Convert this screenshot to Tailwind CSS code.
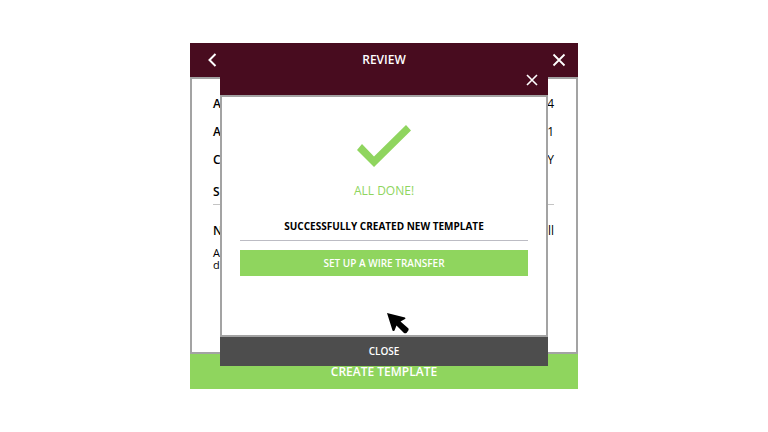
<!DOCTYPE html>
<html lang="en">
<head>
    <meta charset="UTF-8">
    <meta name="viewport" content="width=device-width, initial-scale=1.0">
    <title>Create Template</title>
    <script src="https://cdn.jsdelivr.net/npm/@tailwindcss/browser@4"></script>
</head>
<body class="min-h-screen bg-white flex justify-center items-center font-['Open_Sans','Noto_Sans',sans-serif] text-black">

    <main class="relative w-full max-w-[388px] flex flex-col">

        <!-- Review screen -->
        <header class="h-[34px] bg-[#480c1f] text-white flex items-center justify-between px-3">
            <button type="button" aria-label="Back" class="w-5 flex justify-center">
                <svg class="w-[10px] h-[14px]" viewBox="0 0 10 14" fill="none" stroke="currentColor" stroke-width="2"><path d="M8.500 1 2.500 7l6 6"/></svg>
            </button>
            <h1 class="text-xs font-semibold">REVIEW</h1>
            <button type="button" aria-label="Cancel" class="w-5 flex justify-end">
                <svg class="w-[14px] h-[14px]" viewBox="0 0 14 14" fill="none" stroke="currentColor" stroke-width="1.8"><path d="m1.500 1.500 11 11m0-11-11 11"/></svg>
            </button>
        </header>

        <section class="h-[277px] border-2 border-[#a3a3a3] pl-[21px] pr-[22px] pt-[11px] text-xs">
            <dl>
                <div class="flex justify-between leading-7"><dt class="font-semibold">A</dt><dd>4</dd></div>
                <div class="flex justify-between leading-7"><dt class="font-semibold">A</dt><dd>1</dd></div>
                <div class="flex justify-between leading-7"><dt class="font-semibold">C</dt><dd>Y</dd></div>
            </dl>
            <h2 class="pt-1 leading-7 h-[31px] font-semibold border-b border-[#c4c4c4]">S</h2>
            <dl class="pt-3">
                <div class="flex justify-between leading-7"><dt class="font-semibold">N</dt><dd>ll</dd></div>
            </dl>
            <p class="pt-0.5 leading-3 text-[11px]">A<br>d</p>
        </section>

        <button type="button" class="h-[35px] bg-[#8fd55e] text-white text-xs font-semibold">CREATE TEMPLATE</button>

        <!-- Confirmation dialog -->
        <div role="dialog" aria-labelledby="done" class="absolute inset-x-[30px] top-[22px] flex flex-col bg-white">
            <div class="h-[30px] bg-[#480c1f] text-white flex items-center justify-end px-2.5">
                <button type="button" aria-label="Close dialog">
                    <svg class="w-[12px] h-[12px]" viewBox="0 0 12 12" fill="none" stroke="currentColor" stroke-width="1.6"><path d="m1 1 10 10m0-10L1 11"/></svg>
                </button>
            </div>
            <div class="h-[242px] border-2 border-[#a3a3a3] px-[18px] pt-7 flex flex-col items-center text-center">
                <svg class="w-[54px] h-[42px]" viewBox="0 0 54 42" fill="#8fd55e"><path d="M5 19 0 25 17 42 54 5.500 49 0 17 31.500z"/></svg>
                <h2 id="done" class="mt-4 leading-4 text-xs font-medium text-[#8fd55e]">ALL DONE!</h2>
                <p class="mt-[19px] pb-1.5 w-full leading-4 text-[10px] font-bold border-b border-[#bcbcc4]">SUCCESSFULLY CREATED NEW TEMPLATE</p>
                <button type="button" class="mt-[9px] w-full h-[26px] bg-[#8fd55e] text-white text-[10px] font-semibold">SET UP A WIRE TRANSFER</button>
            </div>
            <button type="button" class="h-[29px] bg-[#4d4d4d] text-white text-[10px] font-semibold">CLOSE</button>

            <!-- Pointer -->
            <svg class="absolute left-1/2 ml-[3px] bottom-[32px] w-[22px] h-[21px]" viewBox="0 0 22 21" fill="#000"><path d="M0 0 18 4.500Q19 5.500 18 6L13.500 8.500 21.500 15.500Q22 17 21 18L19.500 20Q18 20.500 17 20L9.500 12.500 7.500 17.500Q6.500 18.500 5.500 17.500Z"/></svg>
        </div>
    </main>

</body>
</html>
